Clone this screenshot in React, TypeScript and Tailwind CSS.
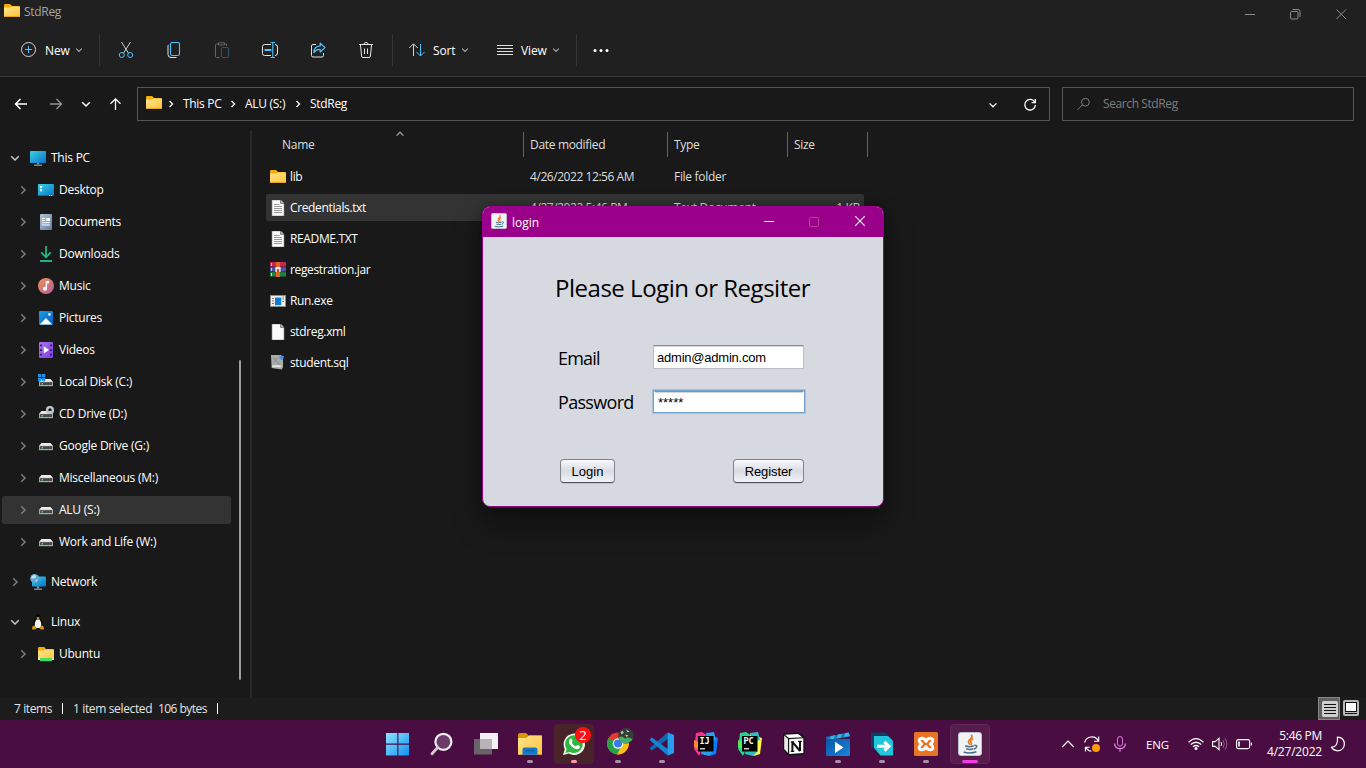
import React from "react";

type Kids = { children?: React.ReactNode };

function Svg({ s = 16, vb, className = "", children }: Kids & { s?: number; vb?: string; className?: string }) {
  return (
    <svg width={s} height={s} viewBox={vb ?? `0 0 ${s} ${s}`} fill="none" className={`block shrink-0 ${className}`}>
      {children}
    </svg>
  );
}

/* ---------- shared icons ---------- */

function FolderIcon({ green = false }: { green?: boolean }) {
  return (
    <Svg>
      <path d="M0 2.2Q0 1 1.2 1H5.6Q6.4 1 7 1.8L7.8 3H15Q16 3 16 4V8H0Z" fill="#f5ac0a" />
      <path d="M0 5.2Q0 4.6 .8 4.6H5.8L7.6 3.4H15Q16 3.4 16 4.4V13Q16 14 15 14H1Q0 14 0 13Z" fill="url(#folderFace)" />
      {!green && <path d="M.3 13.4H15.7" stroke="#e6a01c" />}
      {green && <path d="M2 12H14V15.2H2Z" fill="#45dc5f" />}
      {green && <path d="M0 12.5H2V14H0ZM14 12.5H16V14H14Z" fill="#e8eee8" />}
    </Svg>
  );
}

function MonitorIcon({ globe = false }: { globe?: boolean }) {
  return (
    <Svg>
      <path d="M6.8 12H9.2V14.4H6.8Z" fill="#7c8794" />
      <path d="M4 15.2H12" stroke="#aeb7c0" />
      <rect x={globe ? 2 : 0} y={globe ? 2.5 : 1} width={globe ? 14 : 16} height={globe ? 10 : 12} rx=".8" fill="url(#screen)" />
      {globe && <circle cx="4.6" cy="4.4" r="4.4" fill="#5fa9d6" />}
      {globe && <path d="M1.8 2.4Q3.5 .6 5.6 1.2L6 3.2 3.6 4.6 1 4.2ZM5 6.4L7.6 5.2 7 7.6Z" fill="#c4e4f5" />}
    </Svg>
  );
}

function DesktopIcon() {
  return (
    <Svg>
      <rect y="2" width="16" height="12" rx=".8" fill="url(#screen)" />
      <path d="M2 4H4V6H2ZM2 7.2H4V9.2H2Z" fill="#fff" />
      <path d="M0 13.5H16" stroke="#0c6ea8" />
      <path d="M11 13H12V14H11ZM13 13H14V14H13Z" fill="#d8f1ff" />
    </Svg>
  );
}

function DocumentsIcon() {
  return (
    <Svg>
      <rect x="2" width="12" height="16" rx="1" fill="url(#docFace)" />
      <path d="M4 4.5H7.2M4 6.5H7.2M4 8.7H12M4 11H12" stroke="#fff" strokeWidth="1.1" />
      <path d="M8.3 4H12V7.2H8.3Z" fill="#fff" />
    </Svg>
  );
}

function DownloadsIcon() {
  return (
    <Svg>
      <path d="M8 0V11M3.2 6.4L8 11.2L12.8 6.4" stroke="#22b585" strokeWidth="1.8" />
      <path d="M2 15H14" stroke="#1fb994" strokeWidth="1.9" />
    </Svg>
  );
}

function MusicIcon() {
  return (
    <Svg>
      <circle cx="8" cy="8" r="8" fill="url(#musicFace)" />
      <circle cx="7" cy="10.8" r="2" fill="#fff" />
      <path d="M8.4 10.8V3.6H10.8" stroke="#fff" strokeWidth="1.3" />
      <path d="M8 3H11V5.4H8Z" fill="#fff" />
    </Svg>
  );
}

function PicturesIcon() {
  return (
    <Svg>
      <rect x="1" y="1" width="14" height="14" rx="1" fill="url(#picFace)" />
      <path d="M1.8 14.4L8 8L14.2 14.4Z" fill="#fff" />
      <circle cx="11.4" cy="4.4" r="1.3" fill="#e6f6ff" />
    </Svg>
  );
}

function VideosIcon() {
  return (
    <Svg>
      <rect x="1" width="14" height="16" rx="1" fill="url(#vidFace)" />
      <path d="M2 2.5H4V4.2H2ZM2 7.2H4V8.9H2ZM2 11.8H4V13.5H2ZM12 2.5H14V4.2H12ZM12 7.2H14V8.9H12ZM12 11.8H14V13.5H12Z" fill="#3c1c6c" />
      <path d="M5.8 4.2L11 8L5.8 11.6Z" fill="#fff" />
    </Svg>
  );
}

function DriveIcon({ kind = "plain" }: { kind?: "plain" | "win" | "cd" }) {
  return (
    <Svg>
      <path d="M1 8L3.4 5H12.6L15 8Z" fill="#e9e9e9" />
      <path d="M1 7.8H15V12.2H1Z" fill="#a9a9a9" />
      <path d="M2 8.2H14V11H2Z" fill="#484848" />
      <path d="M3.5 9H5V10.4H3.5Z" fill="#35f04b" />
      {kind === "win" && <path d="M0 0H3.2V3.2H0ZM4 0H7.2V3.2H4ZM0 4H3.2V7.2H0ZM4 4H7.2V7.2H4Z" fill="#1c94e8" />}
      {kind === "cd" && <circle cx="12" cy="4" r="2.9" stroke="#b9c4cb" strokeWidth="2.4" />}
    </Svg>
  );
}

function PenguinIcon() {
  return (
    <Svg>
      <path d="M5.5 3Q5.5 .2 8 .2Q10.5 .2 10.5 3.2Q10.5 5 12.2 8Q14 12 12 14H4Q2 12 3.8 8.2Q5.5 5 5.5 3Z" fill="#060606" />
      <path d="M6.4 5.4H9.6Q12.5 10 10.4 13.4Q8 14.4 5.6 13.4Q3.6 10 6.4 5.4Z" fill="#f4f4f4" />
      <path d="M6.2 3.6L8 3.2L9.8 3.8L8 5.6Z" fill="#f2b41a" />
      <path d="M2 14.4Q2.4 11 4.4 11.6L6.6 14.6Q5 16 2 15.2ZM14 14.4Q13.6 11 11.6 11.6L9.6 14.6Q11 16 14 15.2Z" fill="#d99a12" />
    </Svg>
  );
}

function FileIcon({ lines = false }: { lines?: boolean }) {
  return (
    <Svg>
      <path d="M2 0H10.6L14 3.4V16H2Z" fill="#fafafa" stroke="#8b8b8b" strokeWidth=".6" />
      <path d="M10.6 0V3.4H14" fill="#c4c4c4" stroke="#5f5f5f" strokeWidth=".8" />
      {lines && <path d="M4 4.5H9.5M4 6.5H12M4 8.5H12M4 10.5H12M4 12.5H12" stroke="#8d8d8d" strokeWidth=".9" />}
    </Svg>
  );
}

function ArchiveIcon() {
  return (
    <Svg>
      <rect width="16" height="5" fill="#cf2450" />
      <rect y="5" width="16" height="5" fill="#5550a8" />
      <rect y="10" width="16" height="5" fill="#128a3c" />
      <path d="M0 4.8H16M0 9.8H16M0 14.8H16" stroke="#33203c" strokeWidth=".8" />
      <path d="M1.5 1V4M1.5 6V9M1.5 11V14" stroke="#f2cf45" />
      <rect x="6" width="4" height="15" fill="#e2661c" />
      <path d="M5.4 5H10.6V10H9.2V7.2H6.8V10H5.4Z" fill="#f1f1f1" />
      <path d="M7 7.4H9V9.8H7Z" fill="#c23a2a" />
    </Svg>
  );
}

function ExeIcon() {
  return (
    <Svg>
      <rect x=".5" y="2.5" width="15" height="11" fill="#efefef" stroke="#8b8b8b" />
      <path d="M2 5.5H4M2 8H4M2 10.5H4M12.4 6H14M12.4 8.5H14M12.4 4H14" stroke="#777" />
      <rect x="5" y="4.6" width="6.2" height="7.6" fill="#0b7dd8" />
    </Svg>
  );
}

function SqlIcon() {
  return (
    <Svg>
      <path d="M1 0H11L13 2.5V12.5L11.6 14.4L1.6 13Z" fill="#a9abab" />
      <path d="M3 2.5L9.6 9.6M4 7L8 2.6" stroke="#858787" strokeWidth=".9" />
      <path d="M2.2 11.2H10.8" stroke="#e2e2e2" strokeWidth="2" />
      <path d="M9.2 .8H13.6V3.2L12 5.4L9.6 3.6Z" fill="#4a90e2" />
    </Svg>
  );
}

function JavaIcon({ s = 16 }: { s?: number }) {
  return (
    <Svg s={s} vb="0 0 24 24">
      <rect x=".5" y=".5" width="23" height="23" rx="2.4" fill="#f0f2f4" stroke="#b9c6d2" />
      <path d="M13.4 2.8Q15 5 12.2 7.2Q9 9.6 11.8 12.8M15.2 6.6Q12 8.2 12.6 10Q14.2 11.6 12.9 13.2" stroke="#e87a22" strokeWidth="1.6" />
      <path d="M7.2 13.8Q11 15.6 15.8 13.8M8.2 16.8Q11.5 18.2 15.4 16.8M5.6 20Q12 22 18.4 19.8M16.4 13.2Q19.6 13.2 18.4 15.4Q17.6 16.6 16 17" stroke="#47708e" strokeWidth="1.5" />
    </Svg>
  );
}

function Chevron({ dir, className = "" }: { dir: "down" | "right" | "up"; className?: string }) {
  const d = dir === "down" ? "M1.2 3.2L5 7L8.8 3.2" : dir === "up" ? "M1.2 6.8L5 3L8.8 6.8" : "M3.2 1.2L7 5L3.2 8.8";
  return (
    <Svg s={10} className={className}>
      <path d={d} stroke="currentColor" strokeWidth="1.5" />
    </Svg>
  );
}

/* ---------- toolbar ---------- */

function Toolbar() {
  return (
    <div className="flex h-12 items-center pb-1 text-[12px] font-medium text-white">
      <div className="flex w-[99px] items-center pl-5">
        <Svg>
          <circle cx="8.5" cy="7.5" r="7" stroke="#d5d5d5" />
          <path d="M8.5 4V11M5 7.5H12" stroke="#4cc2ff" />
        </Svg>
        <span className="ml-[9px] w-[25px] pt-0.5 tracking-[-0.1px]">New</span>
        <Chevron dir="down" className="ml-1 scale-75 text-[#aaa]" />
      </div>
      <div className="h-8 w-px bg-[#343434]" />
      <div className="flex w-[292px] items-center gap-8 pl-[18px]">
        <Svg>
          <path d="M3.5 0L10.6 11.4M12.5 0L5.4 11.4" stroke="#d0d0d0" />
          <circle cx="3.8" cy="13" r="2.5" stroke="#4cc2ff" />
          <circle cx="12.2" cy="13" r="2.5" stroke="#4cc2ff" />
        </Svg>
        <Svg>
          <path d="M2.5 3Q2 3 2 4V12.5Q2 15.5 5 15.5H10.5" stroke="#e5e5e5" />
          <rect x="4.5" y=".5" width="9" height="13" rx="1.8" stroke="#4cc2ff" strokeWidth="1.1" />
        </Svg>
        <Svg>
          <path d="M5 2H2.5Q1.5 2 1.5 3V14.5Q1.5 15.5 2.5 15.5H5.5M10.5 2H12.5V4M4.5 .8H10.5V3H4.5Z" stroke="#646464" />
          <rect x="7.5" y="5.5" width="7" height="10" rx=".8" stroke="#365568" />
        </Svg>
        <Svg>
          <path d="M9 2.5H2.5Q.5 2.5 .5 4.5V11.5Q.5 13.5 2.5 13.5H9M13 2.5Q15.5 2.5 15.5 5V11Q15.5 13.5 13 13.5" stroke="#e5e5e5" />
          <path d="M8.5 .5H13M8.5 15.5H13M10.8 .5V15.5" stroke="#4cc2ff" strokeWidth="1.1" />
          <path d="M2.6 8H9.4" stroke="#4cc2ff" strokeWidth="2" />
        </Svg>
        <Svg>
          <path d="M6 2.5H3Q1.5 2.5 1.5 4V13.5Q1.5 15 3 15H12Q13.5 15 13.5 13.5V11" stroke="#e0e0e0" />
          <path d="M10.2 1.2L15 5.6L10.2 10V7.4Q6.2 7.2 3.8 10.6Q4 4.4 10.2 3.9Z" stroke="#4cc2ff" strokeWidth="1.2" strokeLinejoin="round" />
        </Svg>
        <Svg>
          <path d="M1 2.5H15M5.8 2.4Q6 .5 8 .5Q10 .5 10.2 2.4M2.5 3L3.6 14.2Q3.7 15.5 5 15.5H11Q12.3 15.5 12.4 14.2L13.5 3M6.5 6.5V12M9.5 6.5V12" stroke="#e5e5e5" />
        </Svg>
      </div>
      <div className="h-8 w-px bg-[#343434]" />
      <div className="flex w-[183px] items-center pl-4">
        <Svg>
          <path d="M4.5 14V2.2M.3 6L4.5 1.8L8.7 6" stroke="#d5d5d5" />
          <path d="M11.5 2V13.8M7.3 9.8L11.5 14L15.7 9.8" stroke="#4cc2ff" />
        </Svg>
        <span className="ml-2 w-6 pt-0.5 tracking-[-0.15px]">Sort</span>
        <Chevron dir="down" className="ml-[3px] scale-75 text-[#aaa]" />
        <Svg className="ml-[27px]">
          <path d="M0 3.5H16M0 6.5H16M0 9.5H16M0 12.5H16" stroke="#e0e0e0" />
        </Svg>
        <span className="ml-2 w-[27px] pt-0.5 tracking-[-0.15px]">View</span>
        <Chevron dir="down" className="ml-[3px] scale-75 text-[#aaa]" />
      </div>
      <div className="h-8 w-px bg-[#343434]" />
      <Svg className="ml-4">
        <circle cx="2" cy="8.5" r="1.5" fill="#fff" />
        <circle cx="8" cy="8.5" r="1.5" fill="#fff" />
        <circle cx="14" cy="8.5" r="1.5" fill="#fff" />
      </Svg>
    </div>
  );
}

function Header() {
  return (
    <header className="h-[77px] border-b border-[#3b3b3b] bg-[#202020]">
      <div className="flex h-7 items-center">
        <div className="flex h-full flex-1 pl-1 pt-[3px]">
          <FolderIcon />
          <span className="ml-1 text-[12px] leading-[18px] tracking-[-0.3px] text-[#a5a5a5]">StdReg</span>
        </div>
        <div className="flex items-center gap-[29px] pr-[17px] text-[#8c8c8c]">
          <Svg><path d="M3 8.5H13" stroke="currentColor" /></Svg>
          <Svg>
            <rect x="3.5" y="5.5" width="7.5" height="7.5" rx="1" stroke="currentColor" />
            <path d="M5.5 3.5H11Q13 3.5 13 5.5V11" stroke="currentColor" />
          </Svg>
          <Svg className="ml-px"><path d="M3.5 3.5L13 13M13 3.5L3.5 13" stroke="currentColor" /></Svg>
        </div>
      </div>
      <Toolbar />
    </header>
  );
}

function AddressBar() {
  return (
    <div className="flex h-[54px] items-center pl-[13px] pr-3 text-[12px] tracking-[-0.3px]">
      <div className="flex w-[124px] items-center">
        <Svg><path d="M14 8H2.5M7.5 3L2.5 8L7.5 13" stroke="#fff" strokeWidth="1.5" /></Svg>
        <Svg className="ml-[19px]"><path d="M2 8H13.5M8.5 3L13.5 8L8.5 13" stroke="#919191" strokeWidth="1.4" /></Svg>
        <Chevron dir="down" className="ml-[17px] text-white" />
        <Svg className="ml-4"><path d="M8.5 14V2.8M3.5 7.8L8.5 2.8L13.5 7.8" stroke="#fff" strokeWidth="1.3" /></Svg>
      </div>
      <div className="flex h-[34px] w-[913px] items-center border border-[#535353] pl-2 text-white">
        <span className="pb-0.5"><FolderIcon /></span>
        <Chevron dir="right" className="ml-1 mr-[7px] scale-80" />
        <span className="w-10 whitespace-nowrap">This PC</span>
        <Chevron dir="right" className="ml-[5px] mr-[7px] scale-80" />
        <span className="w-[42px] whitespace-nowrap">ALU (S:)</span>
        <Chevron dir="right" className="ml-1.5 mr-[7px] scale-80" />
        <span className="flex-1">StdReg</span>
        <Chevron dir="down" className="mt-0.5 scale-90" />
        <Svg className="ml-[25px] mr-3 mt-0.5" s={14}>
          <path d="M11.8 4.2A5.3 5.3 0 1 0 12.4 7M12.3 1V4.6H8.6" stroke="#fff" strokeWidth="1.3" />
        </Svg>
      </div>
      <div className="ml-3 flex h-[34px] w-[292px] items-center border border-[#535353] pl-3.5 text-[#7d7d7d]">
        <Svg s={14}>
          <circle cx="8.4" cy="5.2" r="3.9" stroke="currentColor" />
          <path d="M5.4 7.8L.6 12.8" stroke="currentColor" />
        </Svg>
        <span className="ml-3 tracking-[-0.4px]">Search StdReg</span>
      </div>
    </div>
  );
}

/* ---------- sidebar ---------- */

function TreeRow({ icon, label, open, root, selected }: { icon: React.ReactNode; label: string; open?: boolean; root?: boolean; selected?: boolean }) {
  return (
    <div className="flex h-8 items-center pl-0.5">
      <div className={`flex h-7 w-[229px] items-center rounded-xs ${root ? "pl-2" : "pl-4"} ${selected ? "bg-[#333333]" : ""}`}>
        <Chevron dir={open ? "down" : "right"} className={open ? "text-[#c8c8c8]" : "text-[#7d7d7d]"} />
        <span className="ml-2.5">{icon}</span>
        <span className="ml-[5px] whitespace-nowrap">{label}</span>
      </div>
    </div>
  );
}

function Sidebar() {
  return (
    <aside className="flex w-[252px] border-r-2 border-[#292929] text-[12px] tracking-[-0.24px] text-white">
      <nav className="w-[239px] pt-[11px]">
        <TreeRow root open icon={<MonitorIcon />} label="This PC" />
        <TreeRow icon={<DesktopIcon />} label="Desktop" />
        <TreeRow icon={<DocumentsIcon />} label="Documents" />
        <TreeRow icon={<DownloadsIcon />} label="Downloads" />
        <TreeRow icon={<MusicIcon />} label="Music" />
        <TreeRow icon={<PicturesIcon />} label="Pictures" />
        <TreeRow icon={<VideosIcon />} label="Videos" />
        <TreeRow icon={<DriveIcon kind="win" />} label="Local Disk (C:)" />
        <TreeRow icon={<DriveIcon kind="cd" />} label="CD Drive (D:)" />
        <TreeRow icon={<DriveIcon />} label="Google Drive (G:)" />
        <TreeRow icon={<DriveIcon />} label="Miscellaneous (M:)" />
        <TreeRow selected icon={<DriveIcon />} label="ALU (S:)" />
        <TreeRow icon={<DriveIcon />} label="Work and Life (W:)" />
        <div className="h-2" />
        <TreeRow root icon={<MonitorIcon globe />} label="Network" />
        <div className="h-2" />
        <TreeRow root open icon={<PenguinIcon />} label="Linux" />
        <TreeRow icon={<FolderIcon green />} label="Ubuntu" />
      </nav>
      <div className="mt-[229px] h-80 w-0.5 rounded-full bg-[#9d9d9d]" />
    </aside>
  );
}

/* ---------- file list ---------- */

const files: { icon: React.ReactNode; name: string; date?: string; type?: string; size?: string; selected?: boolean }[] = [
  { icon: <FolderIcon />, name: "lib", date: "4/26/2022 12:56 AM", type: "File folder" },
  { icon: <FileIcon lines />, name: "Credentials.txt", date: "4/27/2022 5:46 PM", type: "Text Document", size: "1 KB", selected: true },
  { icon: <FileIcon lines />, name: "README.TXT" },
  { icon: <ArchiveIcon />, name: "regestration.jar" },
  { icon: <ExeIcon />, name: "Run.exe" },
  { icon: <FileIcon />, name: "stdreg.xml" },
  { icon: <SqlIcon />, name: "student.sql" },
];

function FileList() {
  return (
    <main className="flex-1 pl-[14px] text-[12px] tracking-[-0.36px] text-white">
      <div className="flex h-[30px] pt-px text-[#dedede]">
        <div className="flex h-[25px] w-[258px] items-center border-r border-[#636363] pl-4">
          <span className="w-[113px] tracking-[-0.25px]">Name</span>
          <Chevron dir="up" className="mb-[21px] scale-90 text-[#a0a0a0]" />
        </div>
        <div className="flex h-[25px] w-36 items-center border-r border-[#636363] pl-1.5 tracking-[-0.32px]">Date modified</div>
        <div className="flex h-[25px] w-[120px] items-center border-r border-[#636363] pl-1.5">Type</div>
        <div className="flex h-[25px] w-20 items-center border-r border-[#636363] pl-1.5">Size</div>
      </div>
      {files.map((f) => (
        <div key={f.name} className="flex h-[31px] items-center">
          <div className={`flex h-[27px] w-[598px] items-center rounded-xs pl-1 ${f.selected ? "bg-[#333333]" : ""}`}>
            {f.icon}
            <span className="ml-1 w-60">{f.name}</span>
            <span className="w-36 tracking-[-0.44px] text-[#dedede]">{f.date}</span>
            <span className="flex-1 tracking-[-0.3px] text-[#dedede]">{f.type}</span>
            <span className="pr-1 text-[#dedede]">{f.size}</span>
          </div>
        </div>
      ))}
    </main>
  );
}

function StatusBar() {
  return (
    <footer className="flex h-[23px] items-center bg-[#1c1c1c] pl-3.5 text-[12px] tracking-[-0.38px] text-[#e4e4e4]">
      <span className="w-12">7 items</span>
      <span className="h-[11px] w-px bg-white" />
      <span className="ml-2.5 w-[85px] whitespace-nowrap tracking-[-0.36px]">1 item selected</span>
      <span className="w-[59px] whitespace-nowrap tracking-[-0.55px]">106 bytes</span>
      <span className="h-[11px] w-px bg-white" />
      <div className="ml-auto flex items-center pr-[7px]">
        <div className="flex h-[23px] w-[22px] items-center justify-center border border-[#878787] bg-[#606060] pl-0.5">
          <Svg>
            <rect width="16" height="16" rx="1.5" fill="#cecece" />
            <path d="M2 3.5H14M2 6.5H14M2 9.5H14M2 12.5H14" stroke="#111" />
          </Svg>
        </div>
        <Svg className="ml-[3px] mb-0.5">
          <rect width="16" height="16" rx="2" fill="#b8b8b8" />
          <rect x="2.5" y="2.5" width="11" height="9" fill="#fff" stroke="#111" />
          <path d="M2 13.5H14" stroke="#111" />
        </Svg>
      </div>
    </footer>
  );
}

/* ---------- login window ---------- */

function LoginDialog() {
  return (
    <section className="absolute left-[482px] top-[206px] flex h-[301px] w-[402px] flex-col overflow-hidden rounded-lg border border-[#9a0089] bg-[#d6d9df] shadow-[0_16px_30px_rgba(0,0,0,0.4),0_0_8px_rgba(0,0,0,0.3)]">
      <div className="flex h-[30px] shrink-0 items-center bg-[#9a0089] pl-2 text-white">
        <span className="pb-0.5"><JavaIcon /></span>
        <span className="ml-[5px] flex-1 pt-px text-[12px]">login</span>
        <Svg><path d="M3 7.5H13" stroke="#fff" /></Svg>
        <Svg className="mb-px ml-[29px]"><rect x="3.5" y="3.5" width="9" height="9" rx="1" stroke="#b8409f" /></Svg>
        <Svg className="ml-[30px] mr-[15px] mb-0.5"><path d="M3.2 3.2L12.8 12.8M12.8 3.2L3.2 12.8" stroke="#fff" strokeWidth="1.1" /></Svg>
      </div>
      <div className="flex-1 pl-[72px] text-black">
        <h1 className="pt-[34px] text-[24px] leading-[34px] tracking-[-0.48px] whitespace-nowrap">Please Login or Regsiter</h1>
        <div className="mt-10 flex h-6 items-center pl-[3px]">
          <label className="w-[95px] pt-0.5 text-[18px] leading-6 tracking-[-0.8px]">Email</label>
          <div className="flex h-6 w-[151px] items-center border border-[#bcbfc4] border-t-[#8d8e8f] bg-white pl-[3px] pt-0.5 font-['Liberation_Sans',sans-serif] text-[13px] tracking-[-0.22px] shadow-[inset_0_1px_0_#d4d5d7]">
            admin@admin.com
          </div>
        </div>
        <div className="mt-5 flex h-[25px] items-center pl-[3px]">
          <label className="w-[94px] text-[18px] leading-6 tracking-[-0.68px]">Password</label>
          <div className="rounded-xs border-2 border-[#73a4d1] outline-1 -outline-offset-1 outline-[#a4c1df]">
            <div className="flex h-[21px] w-[150px] items-center border border-white border-t-[#8d8e8f] bg-white pl-[3px] pt-0.5 font-['Liberation_Sans',sans-serif] text-[13px] shadow-[inset_0_1px_0_#d4d5d7]">
              *****
            </div>
          </div>
        </div>
        <div className="mt-[45px] flex justify-between pl-[5px] pr-[79px] font-['Liberation_Sans',sans-serif] text-[13px]">
          <button className="h-6 w-[55px] rounded-[4px] border border-[#80848b] border-b-[#50545a] bg-linear-to-b from-[#fafafc] via-[#d8dbe1] to-[#f2f4f9] pt-0.5 shadow-[0_1px_0_#bfc2c8]">Login</button>
          <button className="h-6 w-[71px] rounded-[4px] border border-[#80848b] border-b-[#50545a] bg-linear-to-b from-[#fafafc] via-[#d8dbe1] to-[#f2f4f9] pt-0.5 tracking-[-0.1px] shadow-[0_1px_0_#bfc2c8]">Register</button>
        </div>
      </div>
    </section>
  );
}

/* ---------- taskbar ---------- */

function Task({ children, running, active, alert }: Kids & { running?: boolean; active?: boolean; alert?: boolean }) {
  return (
    <div className={`relative flex size-10 items-center justify-center rounded-[4px] ${alert ? "bg-[#48242a]" : ""} ${active ? "border border-[#5f2a54] bg-[#551c4c]" : ""}`}>
      {children}
      {(running || active || alert) && (
        <span className={`absolute left-1/2 h-[3px] -translate-x-1/2 rounded-full ${active ? "bottom-0 w-4 bg-[#f43ae8]" : alert ? "bottom-px w-1.5 bg-[#ff99a4]" : "bottom-px w-1.5 bg-[#a990a7]"}`} />
      )}
    </div>
  );
}

function JetIcon({ label, py }: { label: string; py?: boolean }) {
  const c = py ? ["#21d789", "#fcf84a", "#59e35a", "#2cc0bd"] : ["#fc318c", "#087cfa", "#fd8b2c", "#2c9ef2"];
  return (
    <div className="grid size-6 place-items-center">
      <Svg s={24} className="col-start-1 row-start-1">
        <path d="M2 1L8 0L14 4L5 24L0 17Z" fill={c[0]} />
        <path d="M18 4L24 6L22 22L16 24L10 16L12 2Z" fill={c[1]} />
        <path d="M0 8L8 12L9 20L0 15Z" fill={c[2]} />
        <path d="M12 1L20 0L22 8L14 10ZM8 17L20 19L15 24L7 22Z" fill={c[3]} />
        <rect x="4" y="4" width="15.5" height="15.5" fill="#000" />
        <path d="M6 16.8H11" stroke="#fff" strokeWidth="1.2" />
      </Svg>
      <span className="z-10 col-start-1 row-start-1 mb-[5px] mr-[3px] font-['DejaVu_Sans_Mono','Liberation_Mono',monospace] text-[8.5px] font-bold leading-[9px] text-white">{label}</span>
    </div>
  );
}

function Taskbar() {
  return (
    <div className="flex h-12 items-center bg-[#4a0d42] pl-[378px] text-white">
      <div className="flex gap-1">
        <Task>
          <Svg s={24}><path d="M0 1H11.3V11.6H0ZM12.4 1H23V11.6H12.4ZM0 12.7H11.3V23.6H0ZM12.4 12.7H23V23.6H12.4Z" fill="url(#winFace)" /></Svg>
        </Task>
        <Task>
          <Svg s={24}>
            <circle cx="13.4" cy="9.8" r="8" fill="#6d3b68" stroke="#f0eef0" strokeWidth="2.2" />
            <path d="M7.6 15.6L2 21.8" stroke="#d3cdd3" strokeWidth="2.8" strokeLinecap="round" />
          </Svg>
        </Task>
        <Task>
          <Svg s={24}>
            <path d="M6 1H24V17H6Z" fill="#f2f0f2" />
            <path d="M0 7H18V22.5H0Z" fill="#6a6269" />
            <path d="M6 7H18V17H6Z" fill="#b9b3b8" />
          </Svg>
        </Task>
        <Task running>
          <Svg s={24}>
            <path d="M0 3Q0 1 2 1H8L10.5 3.5H23Q24 3.5 24 4.5V10H0Z" fill="#dd9608" />
            <path d="M0 6H8.5L11 3.6H24V22.8H0Z" fill="url(#folderFace)" />
            <path d="M4.5 17.5Q4.5 15.4 6.6 15.4H17.4Q19.5 15.4 19.5 17.5V22.8H4.5Z" fill="#1079cf" />
            <path d="M8 18.6H16" stroke="#0a5aa0" strokeWidth="1.3" />
          </Svg>
        </Task>
        <Task alert>
          <Svg s={24}>
            <path d="M1 23L2.8 17.2A10.7 10.7 0 1 1 6.9 21.5Z" fill="#f6f8f6" />
            <path d="M3.4 21L4.6 17A8.8 8.8 0 1 1 7.8 19.9Z" fill="#2bb741" />
            <path d="M8.4 6.8Q9.5 6 10.1 7.6L10.6 9Q10.6 9.5 9.6 10.5Q11 13.3 14 14.5L15.3 13Q15.8 12.8 18 14.2Q18 17 15 17.2Q11 17 7.8 12.3Q5.8 9.2 8.4 6.8Z" fill="#fff" />
          </Svg>
          <span className="absolute right-[3px] top-[3px] flex size-4 items-center justify-center rounded-full bg-[#ff1010] text-[13px] leading-4 text-white">2</span>
        </Task>
        <Task running>
          <Svg s={28} vb="0 0 28 28" className="mb-1 ml-1">
            <circle cx="12" cy="15.5" r="11" fill="#e33b2e" />
            <path d="M12 15.5L2.5 10A11 11 0 0 0 11 26.4L16.6 18.1Z" fill="#27a34a" />
            <path d="M12 15.5H16.8L11 26.4A11 11 0 0 0 21.9 10.9H12Z" fill="#fbc116" />
            <circle cx="12" cy="15.5" r="5.2" fill="#fff" />
            <circle cx="12" cy="15.5" r="4.1" fill="#3a7ae8" />
            <circle cx="20" cy="7.8" r="7.8" fill="#343d34" />
            <path d="M12.6 10Q15 7 19 10.5Q23 8 26.6 11.6Q21 17.5 15 14.5Z" fill="#49ad6a" />
            <path d="M14.5 4L17 2.8L17.6 5L15.6 6.6ZM20 1.6L23.6 3.4L21.6 4.4ZM19 6.5L22.6 7.6L20.4 9Z" fill="#c9c3b6" />
          </Svg>
        </Task>
        <Task running>
          <Svg s={24}>
            <path d="M17.6 .4L0 15.8V17L2 18.4L18 6.8Z" fill="#0c69b0" />
            <path d="M17.6 23.6L0 8.2V7L2 5.6L18 17.2Z" fill="#1684d0" />
            <path d="M17.6 .4L24 3V21L17.6 23.6Z" fill="#26a0ee" />
          </Svg>
        </Task>
        <Task><JetIcon label="IJ" /></Task>
        <Task><JetIcon label="PC" py /></Task>
        <Task>
          <Svg s={24}>
            <path d="M1.5 2L16.5 1L22 5V22L6.5 23L1.5 17.5Z" fill="#161616" stroke="#111" />
            <path d="M3 2.8L16 2L20.4 5.2L7 6Z" fill="#fff" />
            <path d="M2.2 3.6L6 7V21L2.2 17Z" fill="#e9e9e9" />
            <path d="M7.2 7.2L21.3 6.3V21L7.2 22Z" fill="#fff" />
            <path d="M10.4 19V10M10.4 9.8L18 19M18 19V9.6" stroke="#111" strokeWidth="2" />
            <path d="M8.8 9.8H12M16 9.4H19.8M8.8 19.3H12.2" stroke="#111" strokeWidth="1.2" />
          </Svg>
        </Task>
        <Task running>
          <Svg s={24}>
            <path d="M0 5L22.6 .4L24 4.4L1 8.5Z" fill="#1478bd" />
            <path d="M5 4L9 3.2L7.8 7L3.6 7.8ZM12 2.5L16 1.7L14.8 5.6L10.6 6.4ZM19 1.2L22.6 .4L24 4L18 5Z" fill="#38b4ea" />
            <path d="M0 7H24V22.5Q24 24 22.5 24H1.5Q0 24 0 22.5Z" fill="url(#filmFace)" />
            <path d="M9 9.8L17.5 15.4L9 21Z" fill="#fff" />
          </Svg>
        </Task>
        <Task running>
          <Svg s={24}>
            <path d="M1 .5H16L23 8H10L1 17Z" fill="#0d3e66" />
            <path d="M4 4H18L23 9V23.5H10.5L4 16Z" fill="#22c6dc" />
            <path d="M7 14.2H18M14.4 9.8L19 14.2L14.4 18.6" stroke="#fff" strokeWidth="3" />
          </Svg>
        </Task>
        <Task running>
          <Svg s={24}>
            <rect width="24" height="24" rx="1.6" fill="#ea7425" />
            <path d="M12 9.4Q10.6 6.2 7.8 6.2Q4.6 6.6 5.4 9.4Q6 11 7.6 12Q6 13 5.4 14.8Q4.6 17.6 7.8 17.8Q10.6 17.8 12 14.6Q13.4 17.8 16.2 17.8Q19.4 17.6 18.6 14.8Q18 13 16.4 12Q18 11 18.6 9.4Q19.4 6.6 16.2 6.2Q13.4 6.2 12 9.4Z" stroke="#fff" strokeWidth="3" strokeLinejoin="round" />
          </Svg>
        </Task>
        <Task active><JavaIcon s={24} /></Task>
      </div>
      <div className="ml-auto flex items-center">
        <Svg><path d="M2.2 11L8 5L13.8 11" stroke="#fff" strokeWidth="1.2" /></Svg>
        <Svg className="ml-2">
          <path d="M.6 6.5A7.4 7.4 0 0 1 14.4 5M14.7 .6V5.3H10M1.4 15.6V11.2H5.8M1.8 11.6Q4 15 7.5 15.2" stroke="#fff" strokeWidth="1.1" />
          <circle cx="12" cy="12" r="4" fill="#ff9a0a" />
        </Svg>
        <Svg className="ml-3">
          <rect x="5.5" y=".5" width="5" height="9.6" rx="2.5" stroke="#da78dc" />
          <path d="M2.6 7.4Q2.6 12.5 8 12.5Q13.4 12.5 13.4 7.4M8 12.5V15.8" stroke="#da78dc" strokeWidth="1.3" />
        </Svg>
        <span className="ml-[18px] w-6 pt-0.5 text-[11.5px] tracking-[-0.2px]">ENG</span>
        <Svg className="ml-[18px]">
          <path d="M.6 6.2Q8-1 15.4 6.2M2.8 8.6Q8 3.8 13.2 8.6M5 10.8Q8 8.2 11 10.8" stroke="#fff" strokeWidth="1.3" />
          <circle cx="8" cy="12.4" r="1.5" fill="#fff" />
        </Svg>
        <Svg className="ml-2">
          <path d="M.6 5.6H3.2L7 2.2V13.8L3.2 10.4H.6Z" stroke="#fff" strokeWidth="1.1" />
          <path d="M9 6Q10.3 8 9 10" stroke="#fff" />
          <path d="M11 4Q13.6 8 11 12M13 2.4Q16.8 8 13 13.6" stroke="#8c6387" />
        </Svg>
        <Svg className="ml-2">
          <rect x=".6" y="3.6" width="13" height="9" rx="1.6" stroke="#fff" strokeWidth="1.1" />
          <path d="M3 5.6V10.6" stroke="#fff" strokeWidth="1.6" />
          <path d="M15.4 6.6V9.6" stroke="#fff" strokeWidth="1.2" />
        </Svg>
        <div className="ml-[5px] w-[65px] text-right text-[12px] leading-4 tracking-[-0.2px] whitespace-nowrap">
          <div className="tracking-[-0.3px]">5:46 PM</div>
          <div>4/27/2022</div>
        </div>
        <Svg className="ml-2 mr-5">
          <path d="M7.4 1.2Q14.2 1.6 14.4 8Q14 14.4 7.6 14.8Q3.6 14.6 1.4 11.4Q8.6 10.6 7.4 1.2Z" stroke="#fff" strokeWidth="1.2" strokeLinejoin="round" />
        </Svg>
      </div>
    </div>
  );
}

function Gradients() {
  const grads: [string, string, string][] = [
    ["folderFace", "#ffe38c", "#fdc63c"],
    ["screen", "#39d3e4", "#0c6fc9"],
    ["docFace", "#b4c6da", "#5d7ea2"],
    ["musicFace", "#f39257", "#ad5c9e"],
    ["picFace", "#1b9bea", "#0b5dbb"],
    ["vidFace", "#a975ef", "#7b3fe0"],
    ["winFace", "#8fe4ff", "#1290f2"],
    ["filmFace", "#0b57a6", "#1b83d8"],
  ];
  return (
    <svg width="0" height="0" className="absolute">
      <defs>
        {grads.map(([id, a, b]) => (
          <linearGradient key={id} id={id} x1="0" y1="0" x2="1" y2="1">
            <stop stopColor={a} />
            <stop offset="1" stopColor={b} />
          </linearGradient>
        ))}
      </defs>
    </svg>
  );
}

export default function App() {
  return (
    <div className="relative flex h-[768px] w-[1366px] flex-col overflow-hidden bg-[#191919] font-['Open_Sans','Noto_Sans',sans-serif]">
      <Gradients />
      <Header />
      <AddressBar />
      <div className="flex h-[566px]">
        <Sidebar />
        <FileList />
      </div>
      <StatusBar />
      <Taskbar />
      <LoginDialog />
    </div>
  );
}
